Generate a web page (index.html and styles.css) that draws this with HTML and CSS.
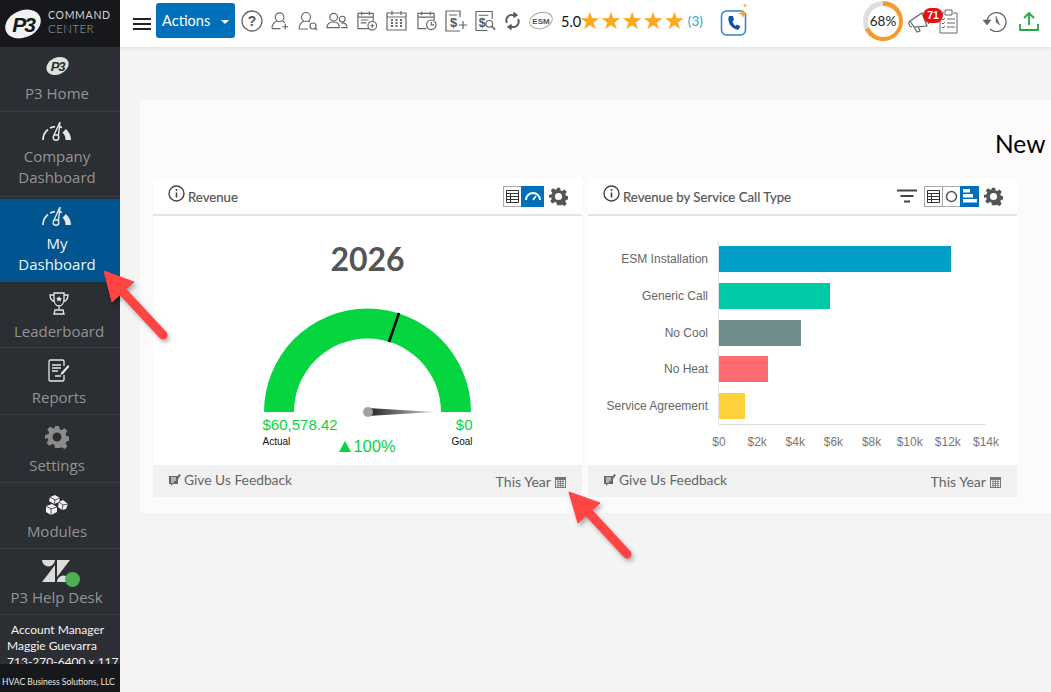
FILE: index.html
```html
<!DOCTYPE html>
<html lang="en">
<head>
<meta charset="utf-8">
<title>Command Center</title>
<link rel="stylesheet" href="styles.css">
</head>
<body>
<div class="app">
  <aside class="sidebar">
    <div class="brand">
      <svg class="brand-logo" viewBox="0 0 36 32"><ellipse cx="18" cy="16" rx="18.500" ry="13.500" transform="rotate(-24 18 16)" fill="#f2f2f2"/><text x="18" y="24" text-anchor="middle" class="logo-text">P3</text></svg>
      <div class="brand-text"><span class="b1">COMMAND</span><span class="b2">CENTER</span></div>
    </div>
    <a class="nav nav-home">
      <svg class="ic" width="23" height="20" viewBox="0 0 36 32"><ellipse cx="18" cy="16" rx="18.500" ry="13.500" transform="rotate(-24 18 16)" fill="#dfe3df"/><text x="18" y="24" text-anchor="middle" class="logo-text dim">P3</text></svg>
      <span>P3 Home</span>
    </a>
    <a class="nav nav-company">
      <svg class="ic" width="30" height="20" viewBox="0 0 30 20"><use href="#dial"/></svg>
      <span>Company<br>Dashboard</span>
    </a>
    <a class="nav nav-my">
      <svg class="ic" width="30" height="20" viewBox="0 0 30 20"><use href="#dial"/></svg>
      <span>My<br>Dashboard</span>
    </a>
    <a class="nav nav-leader">
      <svg class="ic" width="20" height="23" viewBox="0 0 20 23"><path d="M5 1h10v6c0 4-2 7-5 7s-5-3-5-7zM5 3H1c0 4 2 6 5 7M15 3h4c0 4-2 6-5 7M10 14v3M6 18h8l1 4H5z" fill="none" stroke="#e6e6e6" stroke-width="1.300"/><path d="M10 4l1 2h2l-1.500 1.500.5 2-2-1-2 1 .5-2L7 6h2z" fill="#e6e6e6"/></svg>
      <span>Leaderboard</span>
    </a>
    <a class="nav nav-reports">
      <svg class="ic" width="22" height="23" viewBox="0 0 22 23"><path d="M16 7V2l-1-1H2L1 2v19l1 1h13l1-1v-5M4 6h9M4 9h9M4 12h6M7 17h6" fill="none" stroke="#e6e6e6" stroke-width="1.300"/><path d="M20 6l1.500 1.500L15 15l-2.500 1 .8-2.500z" fill="#e6e6e6"/></svg>
      <span>Reports</span>
    </a>
    <a class="nav nav-settings">
      <svg class="ic" width="24" height="24" viewBox="0 0 24 24"><use href="#gear" fill="#8c8c8c"/></svg>
      <span>Settings</span>
    </a>
    <a class="nav nav-modules">
      <svg class="ic" width="24" height="22" viewBox="0 0 24 22"><path d="M5 2l5-2 5 3-1 4-5 2-5-3zM14 7l4-2 5 4-2 5-4 1-4-3zM1 11l6-2 5 3v5l-6 3-5-3z" fill="#f0f0f0"/><path d="M1 11l5 3v6M6 14l6-2M5 2l5 3 5-2M10 5l-1 4M14 7l4 3 5-1M18 10l-1 5" fill="none" stroke="#2b2e33" stroke-width=".8"/></svg>
      <span>Modules</span>
    </a>
    <a class="nav nav-help">
      <span class="zen">
        <svg width="28" height="22" viewBox="0 0 28 22"><path d="M0 0h13a6.500 6.500 0 0 1-13 0zM13 5v17H0zM15 0h13L15 17zM15 22a6.500 6.500 0 0 1 13 0z" fill="#dcdcdc"/></svg>
        <i class="online"></i>
      </span>
      <span>P3 Help Desk</span>
    </a>
    <div class="manager">
      <div class="m-title">Account Manager</div>
      <div>Maggie Guevarra</div>
      <div>713-270-6400 x 117</div>
    </div>
    <div class="side-foot">HVAC Business Solutions, LLC</div>
  </aside>

  <div class="content">
    <header class="topbar">
      <svg class="burger" width="18" height="14" viewBox="0 0 18 14"><path d="M0 2h18M0 7h18M0 12h18" stroke="#222" stroke-width="2"/></svg>
      <button class="actions">Actions <i class="caret"></i></button>
      <div class="tools">
        <svg class="t t-help" width="22" height="22" viewBox="0 0 22 22"><circle cx="11" cy="11" r="10" fill="none" stroke="#666" stroke-width="1.300"/><text x="11" y="16" text-anchor="middle" class="qm">?</text></svg>
        <svg class="t" width="19" height="20" viewBox="0 0 20 20"><circle cx="9" cy="6" r="4.500" class="ln"/><path d="M1 18c0-5 3-7 5-8M12 10c1 .5 2 1 2.500 2M1 18h9M15 13v6M12 16h6" class="ln"/></svg>
        <svg class="t" width="20" height="20" viewBox="0 0 20 20"><circle cx="8" cy="6" r="4.500" class="ln"/><path d="M1 18c0-5 3-7 5-8M10 10l2 1M1 18h9" class="ln"/><circle cx="15" cy="15" r="3" class="ln"/><path d="M17 17l2 2" class="ln"/></svg>
        <svg class="t" width="22" height="20" viewBox="0 0 23 20"><circle cx="8" cy="6" r="4" class="ln"/><circle cx="17" cy="8" r="3" class="ln"/><path d="M1 17c0-4 3-6 7-6s6 2 6 6zM16 12c3 0 6 1 6 5h-6" class="ln"/></svg>
        <svg class="t" width="22" height="22" viewBox="0 0 23 22"><path d="M14 19H2V3h16v8M2 7h16M6 1v4M14 1v4M5 10h8M5 13h6" class="ln"/><circle cx="17" cy="16" r="4.500" class="ln"/><path d="M17 14v4M15 16h4" class="ln"/></svg>
        <svg class="t" width="21" height="21" viewBox="0 0 21 21"><path d="M1 3h19v17H1zM1 7h19M6 1v4M15 1v4" class="ln"/><path d="M5 10h2M9.500 10h2M14 10h2M5 13h2M9.500 13h2M14 13h2M5 16h2M9.500 16h2M14 16h2" class="ln thick"/></svg>
        <svg class="t t-clock" width="20" height="22" viewBox="0 0 21 22"><path d="M10 19H1V3h17v7M1 7h17M5 1v4M14 1v4" class="ln"/><circle cx="15" cy="15" r="5" class="ln"/><path d="M15 12v3h3" class="ln"/></svg>
        <svg class="t" width="22" height="22" viewBox="0 0 22 22"><path d="M15 7V1H1v20h14M4 5h8" class="ln"/><text x="5" y="17" class="dollar">$</text><path d="M18 11v8M14 15h8" class="ln"/></svg>
        <svg class="t" width="21" height="22" viewBox="0 0 22 22"><path d="M18 9V1H1v20h12M4 5h10" class="ln"/><text x="4" y="17" class="dollar">$</text><circle cx="15" cy="14" r="3.500" class="ln"/><path d="M17.500 16.500L21 20" class="ln thick"/></svg>
        <svg class="t" width="17" height="20" viewBox="0 0 18 20"><path d="M3 12C1 7 5 2 11 4M15 8c2 5-2 10-8 8" fill="none" stroke="#555" stroke-width="2"/><path d="M10 0l5 4-5 3zM8 13l-5 3 5 4z" fill="#555"/></svg>
        <svg class="t t-esm" width="24" height="19" viewBox="0 0 24 19"><ellipse cx="12" cy="9.500" rx="11.500" ry="8" transform="rotate(-15 12 9.500)" fill="none" stroke="#aaa"/><text x="12" y="12.500" text-anchor="middle" class="esm">ESM</text></svg>
      </div>
      <div class="rating">
        <span class="score">5.0</span>
        <span class="stars">★★★★★</span>
        <span class="count">(3)</span>
      </div>
      <svg class="phone" width="30" height="33" viewBox="0 0 30 33"><rect x="1.500" y="8" width="24" height="24" rx="5" fill="none" stroke="#2f7de1" stroke-width="1.500"/><path d="M9 13c-2 5 1 12 9 14l2.500-3.500-3.500-2-1.500 1.500c-1.500-1-2.500-2.500-3-5l1.500-1-1-4z" fill="#0f4fae"/><path d="M23 6l1.200 3.300L28 10.500l-3.800 1.200L23 15l-1.200-3.300L18 10.500l3.800-1.200zM25 0l.6 1.900 1.900.6-1.900.6L25 5l-.6-1.900-1.900-.6 1.900-.6z" fill="#f3a81f"/></svg>
      <div class="right">
        <div class="progress"><span>68%</span></div>
        <div class="notify">
          <svg width="22" height="25" viewBox="0 0 22 25"><path d="M2 12l12-8 5 13-13 1zM2 12c-2 1-1 6 2 6M6 18l3 5 3-1-2-4.500M17 4l4 11" fill="none" stroke="#666" stroke-width="1.200"/></svg>
          <b class="badge">71</b>
          <svg width="19" height="25" viewBox="0 0 19 25"><path d="M5 4H1v20h17V4h-4M6 1h7v5H6zM8 10h8M8 14h8M8 18h8M3 10l1 1 2-2M3 14l1 1 2-2M3 18l1 1 2-2" fill="none" stroke="#666"/></svg>
        </div>
        <svg class="history" width="24" height="22" viewBox="0 0 24 22"><path d="M4 12a9.500 9.500 0 1 1 3 7" fill="none" stroke="#666" stroke-width="1.300"/><path d="M0 10h8l-4 5zM13 6v6l4 3" fill="#666" stroke="#666" stroke-width=".6"/></svg>
        <svg class="upload" width="20" height="20" viewBox="0 0 20 20"><path d="M10 14V2M5 7l5-5 5 5M1 13v6h18v-6" fill="none" stroke="#28a745" stroke-width="1.800"/></svg>
      </div>
    </header>

    <main class="page">
      <section class="panel">
        <h1 class="panel-title">New</h1>
        <div class="cards">
          <article class="card">
            <div class="card-head">
              <svg class="info" width="17" height="17" viewBox="0 0 17 17"><use href="#info"/></svg>
              <span class="card-title">Revenue</span>
              <div class="card-tools">
                <span class="seg">
                  <span class="seg-btn"><svg width="13" height="13" viewBox="0 0 13 13"><use href="#table"/></svg></span><span class="seg-btn on wide"><svg width="16" height="9" viewBox="0 0 16 9"><path d="M1 8a7 7 0 0 1 14 0" fill="none" stroke="#fff" stroke-width="2"/><path d="M8 8l3-4" stroke="#fff" stroke-width="1.500"/></svg></span>
                </span>
                <svg class="cog" width="19" height="19" viewBox="0 0 24 24"><use href="#gear" fill="#555"/></svg>
              </div>
            </div>
            <div class="card-body gauge-body">
              <div class="year">2026</div>
              <div class="gauge">
                <svg width="208" height="104" viewBox="0 0 208 104" class="arc">
                  <defs><linearGradient id="nd"><stop offset="0" stop-color="#222"/><stop offset="1" stop-color="#ccc"/></linearGradient></defs>
                  <path d="M0 104a103.500 103.500 0 0 1 207 0h-30a73.500 73.500 0 0 0-147 0z" fill="#05d640"/>
                  <path d="M125 34L135 5" stroke="#000" stroke-width="2.500"/>
                  <path d="M104 100L170 104L104 108z" fill="url(#nd)"/>
                  <circle cx="104" cy="104" r="5" fill="#9aa59e"/>
                </svg>
              </div>
              <div class="g-values">
                <div class="g-col"><span class="g-val">$60,578.42</span><span class="g-lab">Actual</span></div>
                <div class="g-pct"><i class="tri"></i>100%</div>
                <div class="g-col g-end"><span class="g-val">$0</span><span class="g-lab">Goal</span></div>
              </div>
            </div>
            <div class="card-foot">
              <span class="fb"><svg width="13" height="13" viewBox="0 0 13 13"><use href="#fb"/></svg> Give Us Feedback</span>
              <span class="range">This Year <svg width="13" height="12" viewBox="0 0 13 12"><use href="#cal"/></svg></span>
            </div>
          </article>

          <article class="card">
            <div class="card-head">
              <svg class="info" width="17" height="17" viewBox="0 0 17 17"><use href="#info"/></svg>
              <span class="card-title">Revenue by Service Call Type</span>
              <div class="card-tools">
                <svg class="filter" width="20" height="14" viewBox="0 0 20 14"><path d="M0 1.500h20M3.500 7h13M7 12.500h6" stroke="#444" stroke-width="2.200"/></svg>
                <span class="seg">
                  <span class="seg-btn"><svg width="13" height="13" viewBox="0 0 13 13"><use href="#table"/></svg></span><span class="seg-btn"><svg width="13" height="13" viewBox="0 0 13 13"><circle cx="6.500" cy="6.500" r="5" fill="none" stroke="#555" stroke-width="1.500"/></svg></span><span class="seg-btn on"><svg width="14" height="14" viewBox="0 0 14 14"><path d="M0 0h7v3.500H0zM0 5h10v3.500H0zM0 10h14v3.500H0z" fill="#fff"/></svg></span>
                </span>
                <svg class="cog" width="19" height="19" viewBox="0 0 24 24"><use href="#gear" fill="#555"/></svg>
              </div>
            </div>
            <div class="card-body chart">
              <div class="rows">
                <div class="row"><span class="r-lab">ESM Installation</span><i class="bar c1"></i></div>
                <div class="row"><span class="r-lab">Generic Call</span><i class="bar c2"></i></div>
                <div class="row"><span class="r-lab">No Cool</span><i class="bar c3"></i></div>
                <div class="row"><span class="r-lab">No Heat</span><i class="bar c4"></i></div>
                <div class="row"><span class="r-lab">Service Agreement</span><i class="bar c5"></i></div>
              </div>
              <div class="axis"><span>$0</span><span>$2k</span><span>$4k</span><span>$6k</span><span>$8k</span><span>$10k</span><span>$12k</span><span>$14k</span></div>
            </div>
            <div class="card-foot">
              <span class="fb"><svg width="13" height="13" viewBox="0 0 13 13"><use href="#fb"/></svg> Give Us Feedback</span>
              <span class="range">This Year <svg width="13" height="12" viewBox="0 0 13 12"><use href="#cal"/></svg></span>
            </div>
          </article>
        </div>
      </section>
    </main>
  </div>
</div>

<svg class="arrow arrow-a" width="70" height="75" viewBox="0 0 70 75"><path d="M63 67L24 25" stroke="#ff4444" stroke-width="9" stroke-linecap="round"/><path d="M4 3L34 14L12 34z" fill="#ff4444" stroke="#ff4444" stroke-linejoin="round"/></svg>
<svg class="arrow arrow-b" width="70" height="75" viewBox="0 0 70 75"><path d="M61 65L24 25" stroke="#ff4444" stroke-width="9" stroke-linecap="round"/><path d="M3 3L34 14L12 34z" fill="#ff4444" stroke="#ff4444" stroke-linejoin="round"/></svg>

<svg class="defs" width="0" height="0">
  <defs>
    <symbol id="dial" viewBox="0 0 30 20"><path d="M1 18A13.500 13.500 0 0 1 6 7.500M8 6A13.500 13.500 0 0 1 13 4.600M17 4.600L20 5.500" fill="none" stroke="#e6e6e6" stroke-width="1.700"/><path d="M23.800 6.900A14.500 14.500 0 0 1 29 18H23.500A9 9 0 0 0 20.500 10.800z" fill="#e6e6e6"/><path d="M18 0L11.800 13.500M18 0L16.400 13.800" fill="none" stroke="#e6e6e6" stroke-width="1.400"/><circle cx="14" cy="15.500" r="2.800" fill="none" stroke="#e6e6e6" stroke-width="1.400"/></symbol>
    <symbol id="gear" viewBox="0 0 24 24"><path d="M10 1h4l.7 3.300 2 .8L19.600 3.300l2.800 2.800-1.800 2.900.8 2 3.300.7v4l-3.300.7-.8 2 1.800 2.900-2.800 2.800-2.900-1.800-2 .8L14 23h-4l-.7-3.300-2-.8-2.900 1.800-2.800-2.800 1.800-2.900-.8-2L0 14v-4l3.300-.7.8-2L2.300 4.400 5.100 1.600 8 3.400l2-.8zM12 7.500a4.500 4.500 0 1 0 0 9 4.500 4.500 0 0 0 0-9z" fill-rule="evenodd"/></symbol>
    <symbol id="info" viewBox="0 0 17 17"><circle cx="8.500" cy="8.500" r="7.500" fill="none" stroke="#444" stroke-width="1.400"/><path d="M8.500 7.500v5" stroke="#444" stroke-width="1.600"/><circle cx="8.500" cy="5" r="1" fill="#444"/></symbol>
    <symbol id="table" viewBox="0 0 13 13"><path d="M.5.500h12v12H.5zM.5 3.500h12M.5 6.500h12M.5 9.500h12M4.500 3.500v9" fill="none" stroke="#333"/></symbol>
    <symbol id="fb" viewBox="0 0 13 13"><path d="M1 2h9v8H5l-2 2v-2H1z" fill="#666"/><path d="M3 4h5M3 6h5M3 8h3" stroke="#fff"/><path d="M11 0l2 1-3 4-1-1z" fill="#666"/></symbol>
    <symbol id="cal" viewBox="0 0 13 12"><path d="M1 1h11v11H1z" fill="#777"/><path d="M2 4h9v7H2z" fill="#eee"/><path d="M3 5.500h7M3 7.500h7M3 9.500h7M4 4v7M6.500 4v7M9 4v7" stroke="#777" stroke-width=".8"/></symbol>
  </defs>
</svg>
</body>
</html>
```

FILE: styles.css
```css
* { box-sizing: border-box; }
html, body { margin: 0; height: 100%; overflow: hidden; }
body { font-family: "Lato", "Liberation Sans", sans-serif; background: #f4f4f4; color: #333; }
.app { display: flex; width: 1051px; height: 692px; overflow: hidden; }

/* Sidebar */
.sidebar { position: relative; flex: 0 0 120px; height: 692px; background: #2b2e33; overflow: hidden; font-family: "Open Sans", "Noto Sans", sans-serif; }
.brand { height: 47px; background: #16181b; display: flex; align-items: center; padding-left: 5px; gap: 7px; }
.brand-logo { width: 36px; height: 32px; flex: none; overflow: visible; }
.logo-text { font: italic 700 21px "Liberation Sans", sans-serif; fill: #16181b; letter-spacing: -2px; }
.logo-text.dim { fill: #2b2f33; }
.brand-text { display: flex; flex-direction: column; line-height: 13px; font-size: 10.500px; letter-spacing: .7px; color: #d4d4d4; margin-top: -4px; font-family: "Lato", sans-serif; }
.b2 { color: #a8a8a8; font-weight: 300; font-size: 11.500px; letter-spacing: .4px; }
.nav { display: flex; flex-direction: column; align-items: center; justify-content: flex-start; text-align: center; color: #949494; font-size: 15px; line-height: 21px; border-bottom: 1px solid #3a3d42; padding-right: 6px; }
.nav .ic { display: block; flex: none; }
.nav-home { height: 65px; padding-top: 9px; }
.nav-home span { margin-top: 7px; }
.nav-company { height: 85px; padding-top: 10px; margin-bottom: 2px; }
.nav-company span { margin-top: 4px; }
.nav-my { height: 83px; padding-top: 8px; background: #00548f; color: #f1f5f8; border-bottom: 0; }
.nav-my span { margin-top: 6px; }
.nav-leader { height: 66px; padding-top: 10px; padding-right: 2px; }
.nav-leader span { margin-top: 6px; }
.nav-reports { height: 67px; padding-top: 11px; padding-right: 2px; }
.nav-reports span { margin-top: 5px; }
.nav-settings { height: 68px; padding-top: 10px; }
.nav-settings span { margin-top: 6px; }
.nav-modules { height: 66px; padding-top: 12px; }
.nav-modules span { margin-top: 4px; }
.nav-help { height: 66px; padding-top: 11px; padding-right: 7px; }
.zen { position: relative; display: block; height: 27px; width: 42px; padding-left: 3px; margin-left: 6px; }
.zen svg { display: block; }
.online { position: absolute; left: 26px; top: 12px; width: 15px; height: 15px; border-radius: 50%; background: #4caf50; }
.manager { padding: 7px 0 0 7px; color: #f4f4f4; font-size: 12px; line-height: 16px; font-family: "Lato", sans-serif; white-space: nowrap; }
.m-title { padding-left: 4px; }
.side-foot { position: absolute; left: 0; right: 0; bottom: 0; height: 28px; background: #16181b; color: #e8e8e8; font-size: 8.500px; line-height: 36px; padding-left: 2px; font-family: "Lato", sans-serif; white-space: nowrap; }

/* Top bar */
.content { flex: 1; min-width: 0; display: flex; flex-direction: column; }
.topbar { height: 47px; flex: none; background: #fff; box-shadow: 0 1px 4px rgba(0,0,0,.1); display: flex; align-items: center; padding-left: 13px; position: relative; z-index: 2; }
.burger { flex: none; margin-right: 5px; }
.actions { width: 79px; height: 35px; margin-top: -7px; border: 0; border-radius: 3px; background: #0070ba; color: #fff; font: 14.500px "Lato", sans-serif; padding: 0 0 0 0; text-align: center; white-space: nowrap; }
.caret { display: inline-block; width: 0; height: 0; margin-left: 7px; vertical-align: 2px; border: 4px solid transparent; border-top-color: #fff; border-bottom: 0; }
.tools { display: flex; align-items: center; gap: 8px; margin-left: 6px; margin-top: -6px; }
.t { flex: none; display: block; }
.t-clock { margin-left: 2px; }
.ln { fill: none; stroke: #666; stroke-width: 1.200; }
.thick { stroke-width: 1.800; }
.qm { font: 700 14px "Liberation Sans", sans-serif; fill: #555; }
.dollar { font: 700 13px "Liberation Sans", sans-serif; fill: #555; }
.esm { font: 700 8px "Liberation Sans", sans-serif; fill: #555; }
.rating { display: flex; align-items: center; margin-left: 8px; margin-top: -5px; }
.score { color: #111; font-size: 14.500px; font-family: "Lato", sans-serif; }
.stars { color: #fba81a; font: 24px/1 "DejaVu Sans", sans-serif; letter-spacing: -.4px; margin: -1px 0 0 -2px; }
.count { color: #3aa6c8; font-size: 13.500px; margin-left: 3px; }
.phone { flex: none; margin: -8px 0 0 17px; overflow: visible; }
.right { display: flex; align-items: center; margin-left: auto; padding-right: 12px; margin-top: -5px; }
.progress { width: 40px; height: 40px; border-radius: 50%; background: conic-gradient(#f7992b 0 68%, #dedede 68% 100%); display: flex; align-items: center; justify-content: center; margin-right: 5px; }
.progress span { display: flex; align-items: center; justify-content: center; width: 31px; height: 31px; border-radius: 50%; background: #fff; color: #222; font-size: 13.500px; }
.notify { position: relative; display: flex; align-items: center; width: 53px; gap: 9px; }
.notify svg { flex: none; }
.badge { position: absolute; left: 15px; top: -1px; min-width: 20px; height: 15px; background: #e90f15; color: #fff; border-radius: 8px; font: 700 10.500px/15px "Liberation Sans", sans-serif; text-align: center; }
.history { margin-left: 22px; }
.upload { margin-left: 12px; }

/* Page */
.page { flex: 1; padding: 53px 0 0 20px; overflow: hidden; }
.panel { width: 911px; height: 413px; background: #fcfafb; padding: 0 0 0 13px; overflow: hidden; }
.panel-title { margin: 28px 0 0; height: 50px; font: 400 24.500px/32px "Lato", sans-serif; color: #000; padding-left: 842px; white-space: nowrap; }
.cards { display: flex; gap: 6px; }
.card { width: 429px; height: 319px; background: #fff; display: flex; flex-direction: column; }
.card-head { height: 38px; flex: none; display: flex; align-items: center; padding: 0 14px 0 15px; border-bottom: 2px solid #e5e5e5; }
.info { flex: none; margin: -5px 3px 0 0; }
.card-title { font-size: 13.200px; line-height: 20px; margin-top: 2px; color: #555; -webkit-text-stroke: .2px #555; }
.card-tools { margin-left: auto; display: flex; align-items: center; gap: 5px; }
.filter { margin-right: 2px; }
.seg { display: flex; height: 21px; }
.seg-btn { width: 19px; height: 21px; display: flex; align-items: center; justify-content: center; border: 1px solid #aaa; background: #fff; margin-left: -1px; }
.seg-btn:first-child { margin-left: 0; }
.seg-btn.on { background: #0070ba; border-color: #0070ba; }
.seg-btn.wide { width: 23px; }
.card-body { flex: 1; position: relative; min-height: 0; }
.gauge-body { display: flex; flex-direction: column; align-items: center; padding-top: 21px; }
.year { font: 700 32px/44px "Lato", sans-serif; color: #555; }
.gauge { margin-top: 27px; height: 104px; }
.arc { display: block; overflow: visible; }
.g-values { width: 210px; display: grid; grid-template-columns: 1fr auto 1fr; color: #05d640; }
.g-col { display: flex; flex-direction: column; margin-top: 3px; }
.g-end { align-items: flex-end; }
.g-val { font: 15px/20px "Liberation Sans", sans-serif; }
.g-lab { color: #111; font: 10px/11px "Liberation Sans", sans-serif; margin-top: 1px; }
.g-pct { font: 16.500px/20px "Liberation Sans", sans-serif; margin-top: 24px; white-space: nowrap; display: flex; align-items: center; gap: 2px; }
.tri { width: 0; height: 0; border: 6.500px solid transparent; border-top: 0; border-bottom: 11px solid #05d640; }
.card-foot { height: 32px; flex: none; background: #f1f1f1; display: flex; justify-content: space-between; padding: 0 15px; color: #666; font-size: 13.800px; }
.fb { line-height: 30px; display: flex; align-items: center; height: 30px; gap: 3px; }
.range { line-height: 33px; display: flex; align-items: center; height: 33px; gap: 3px; font-size: 14.100px; }

/* Chart */
.chart { font-family: "Liberation Sans", sans-serif; color: #666; font-size: 12px; padding-top: 25px; }
.rows { display: flex; flex-direction: column; gap: 10.750px; padding: 5px 0; background: linear-gradient(#e2e2e2, #e2e2e2) 130px 0 / 1px 100% no-repeat; }
.row { display: flex; align-items: center; height: 26px; }
.r-lab { width: 120px; text-align: right; margin-right: 11px; white-space: nowrap; }
.bar { display: block; height: 26px; }
.c1 { width: 232px; background: #009fc7; }
.c2 { width: 111px; background: #00c9a5; }
.c3 { width: 82px; background: #6f8d8d; }
.c4 { width: 49px; background: #ff6b70; }
.c5 { width: 26px; background: #ffd23c; }
.axis { display: flex; justify-content: space-between; width: 267px; margin: 0 0 0 131px; border-top: 1px solid #ddd; padding-top: 10px; line-height: 14px; color: #777; }
.axis span { width: 0; display: flex; justify-content: center; white-space: nowrap; }

.arrow { position: absolute; z-index: 5; filter: drop-shadow(2px 3px 2px rgba(0,0,0,.3)); }
.arrow-a { left: 100px; top: 268px; }
.arrow-b { left: 566px; top: 489px; }
.defs { position: absolute; }
```
